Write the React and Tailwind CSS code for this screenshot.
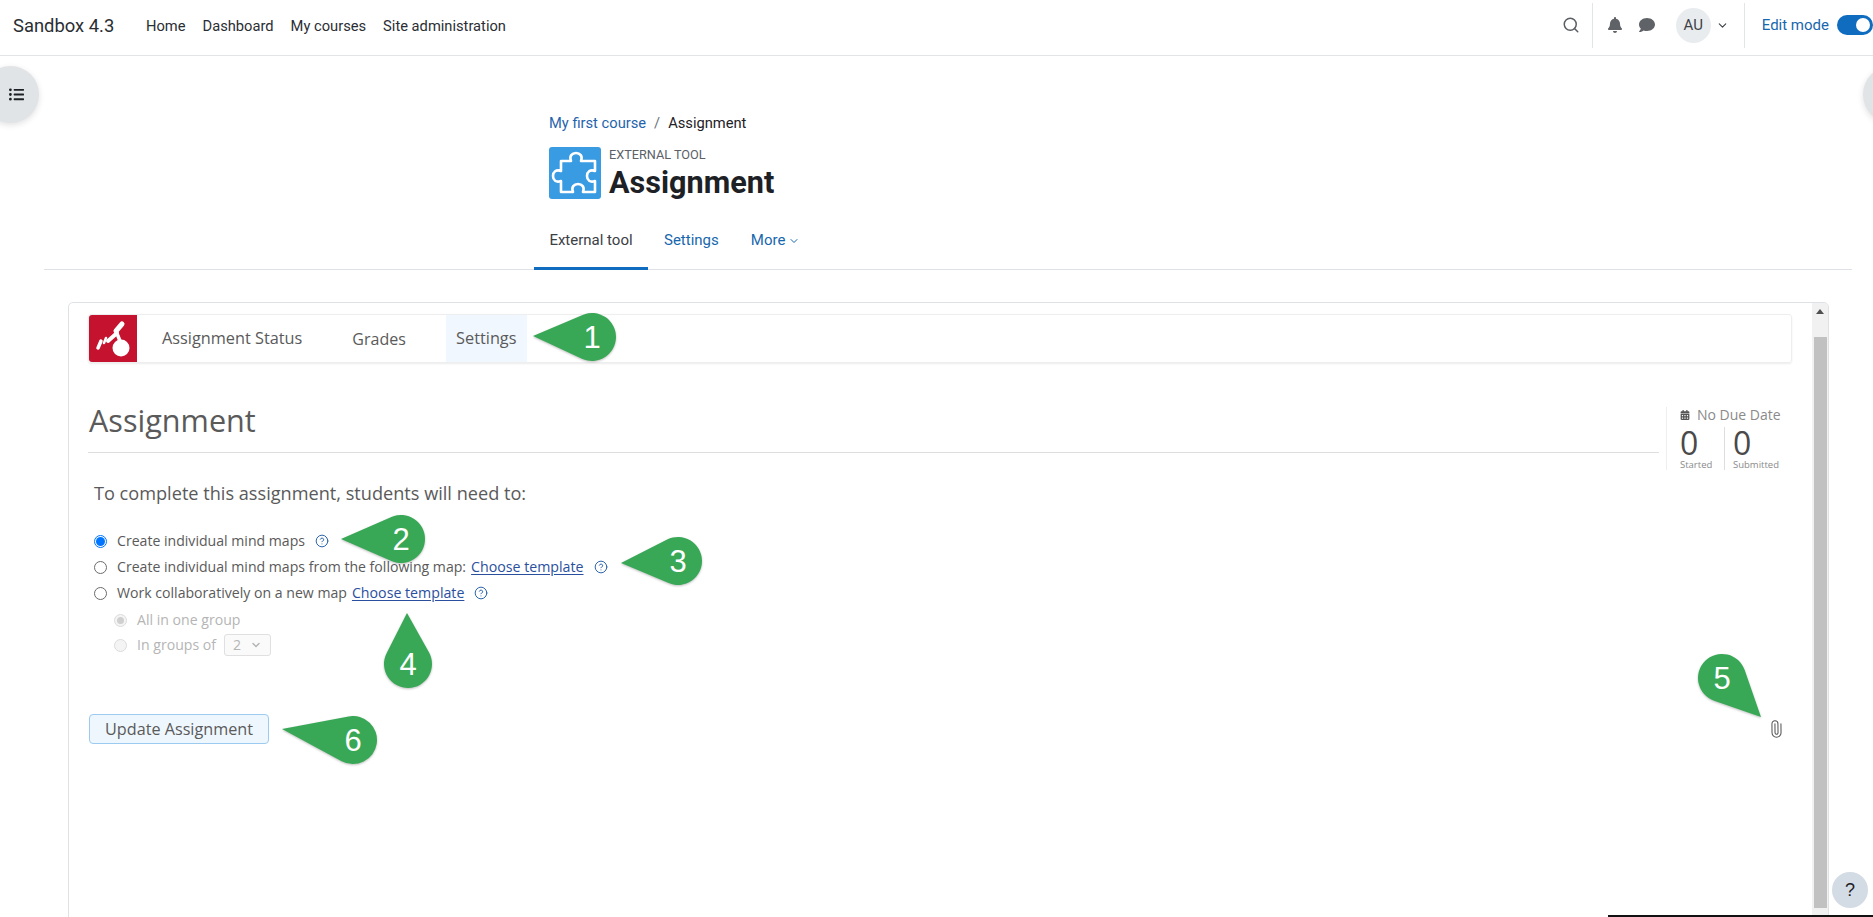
import React from "react";
import { Search, ChevronDown, CircleHelp, Paperclip } from "lucide-react";
import { FaBell, FaComment, FaListUl, FaCalendarAlt } from "react-icons/fa";

function Callout({ n, pos, tip }) {
  const r = 24;
  const d = Math.hypot(tip[0], tip[1]);
  const base = Math.atan2(tip[1], tip[0]);
  const off = Math.acos(r / d);
  const a = [r * Math.cos(base + off), r * Math.sin(base + off)];
  const b = [r * Math.cos(base - off), r * Math.sin(base - off)];
  const path = `M${tip[0]} ${tip[1]} L${a[0]} ${a[1]} A${r} ${r} 0 1 1 ${b[0]} ${b[1]} Z`;
  return (
    <div className={`absolute w-12 h-12 flex items-center justify-center ${pos}`}>
      <svg viewBox="0 0 48 48" className="absolute inset-0 w-12 h-12 overflow-visible drop-shadow-[0_1px_1px_rgba(0,0,0,0.25)]">
        <g transform="translate(24 24)">
          <path d={path} fill="#38a856" />
        </g>
      </svg>
      <span className="relative font-['Liberation_Sans',sans-serif] text-[31px] leading-none text-white">{n}</span>
    </div>
  );
}

function RadioDot({ checked, disabled }) {
  if (disabled) {
    return (
      <span className="w-[13px] h-[13px] rounded-full border border-[#dcdcdc] bg-[#f4f4f4] flex items-center justify-center shrink-0">
        {checked && <span className="w-[7px] h-[7px] rounded-full bg-[#cfcfcf]" />}
      </span>
    );
  }
  return checked ? (
    <span className="w-[13px] h-[13px] rounded-full border border-[#0075ff] bg-white flex items-center justify-center shrink-0">
      <span className="w-[9px] h-[9px] rounded-full bg-[#0075ff]" />
    </span>
  ) : (
    <span className="w-[13px] h-[13px] rounded-full border border-[#6b6b6b] bg-white shrink-0" />
  );
}

function Help() {
  return <CircleHelp size={14} strokeWidth={1.7} className="text-[#2a63a8] shrink-0" />;
}

function Tpl() {
  return <a className="text-[#2a4f9e] underline text-[14.2px] underline-offset-2">Choose template</a>;
}

export default function App() {
  return (
    <div className="relative h-[917px] overflow-hidden bg-white font-['Roboto',sans-serif] text-[#1d2125]">
      {/* top nav */}
      <header className="h-[56px] border-b border-[#e3e4e5] pb-[5px] flex items-center text-[14.7px] text-[#2a2e33]">
        <span className="ml-[13px] pt-[1px] text-[18.4px] w-[133px]">Sandbox 4.3</span>
        <nav className="flex gap-[17px] pt-[2px]">
          <a>Home</a>
          <a>Dashboard</a>
          <a>My courses</a>
          <a>Site administration</a>
        </nav>
        <div className="ml-auto flex items-center h-[45px]">
          <Search size={18} strokeWidth={2} className="text-[#5a5f64] mr-[12px]" />
          <span className="w-px h-[45px] bg-[#e3e4e5]" />
          <FaBell size={16} className="text-[#5f6368] ml-[14px]" />
          <FaComment size={16} className="text-[#5f6368] ml-[16px]" />
          <span className="ml-[21px] w-[35px] h-[35px] rounded-full bg-[#e9ecef] flex items-center justify-center text-[#3c4146] text-[15px]">AU</span>
          <ChevronDown size={13} strokeWidth={2} className="ml-[5px] text-[#3c4146]" />
          <span className="ml-[15px] w-px h-[45px] bg-[#e3e4e5]" />
          <span className="ml-[17px] text-[#1667ae] text-[15px]">Edit mode</span>
          <span className="ml-[8px] w-[36px] h-[20px] rounded-full bg-[#0f6cbf] flex items-center justify-end pr-[3px]">
            <span className="w-[14px] h-[14px] rounded-full bg-white" />
          </span>
        </div>
      </header>

      {/* page header */}
      <div className="pl-[549px] pt-[57px]">
        <div className="flex items-center gap-[8px] text-[14.7px] leading-[20px]">
          <a className="text-[#1f64ad]">My first course</a>
          <span className="text-[#6a737b]">/</span>
          <span>Assignment</span>
        </div>
        <div className="mt-[14px] flex items-start gap-[8px]">
          <div className="w-[52px] h-[52px] rounded-[3px] bg-[#399be2] flex items-center justify-center">
            <svg viewBox="0 0 52 52" className="w-[52px] h-[52px]" fill="none" stroke="#fff" strokeWidth="2.6" strokeLinejoin="round">
              <path d="M12 14H22C20 9 23 6 27 6C31 6 34 9 32 14H46V24C41 22 38 25 38 29C38 33 41 36 46 34V45H34C36 40 33 37 29 37C25 37 22 40 24 45H12V34C7 36 4 33 4 29C4 25 7 22 12 24Z" />
            </svg>
          </div>
          <div className="flex flex-col pt-[1px]">
            <span className="text-[12.7px] leading-[14px] text-[#5b6167] uppercase">External tool</span>
            <h1 className="mt-[3px] text-[30.6px] leading-[36px] font-bold text-[#1d2125]">Assignment</h1>
          </div>
        </div>
      </div>

      {/* tabs */}
      <div className="mt-[18px] ml-[44px] w-[1808px] border-b border-[#dee2e6] h-[51px] pl-[490px] flex text-[15px]">
        <a className="w-[114px] h-[51px] border-b-[3px] border-[#0f6cbf] pb-[5px] flex items-center justify-center text-[#3b4046]">External tool</a>
        <a className="ml-[16px] h-[51px] pb-[8px] flex items-center text-[#1667ae]">Settings</a>
        <a className="ml-[32px] h-[51px] pb-[8px] flex items-center gap-[3px] text-[#1667ae]">More <ChevronDown size={12} strokeWidth={2} /></a>
      </div>

      {/* iframe box */}
      <div className="absolute left-[68px] top-[302px] w-[1761px] h-[640px] border border-[#dee2e6] rounded-[5px] flex font-['Open_Sans',sans-serif] text-[#5a5a5a] overflow-hidden">
        <div className="flex-1 min-w-0 flex flex-col pl-[19px] pt-[11px]">
          <div className="w-[1704px] h-[49px] border border-[#eeeeee] rounded-[3px] shadow-[0_1px_2px_rgba(0,0,0,0.08)] flex items-stretch text-[16.3px]">
            <div className="w-[48px] bg-[#c5122f] rounded-l-[3px] flex items-center justify-center shrink-0">
              <svg viewBox="0 0 48 48" className="w-[48px] h-[48px]" fill="none" stroke="#fff" strokeLinecap="round">
                <circle cx="32" cy="33" r="8.5" fill="#fff" stroke="none" />
                <path d="M33 9L27 16" strokeWidth="5" />
                <path d="M27 16L31 26" strokeWidth="3.5" />
                <path d="M28 18L19 26" strokeWidth="4" />
                <path d="M17 23L15 28" strokeWidth="2.5" />
                <path d="M12 26L9 33" strokeWidth="3.5" />
              </svg>
            </div>
            <span className="ml-[25px] flex items-center">Assignment Status</span>
            <span className="ml-[50px] flex items-center text-[16px]">Grades</span>
            <span className="ml-[40px] w-[81px] bg-[#f0f7fe] flex items-center justify-center">Settings</span>
          </div>

          <div className="mt-[27px] flex">
            <div className="w-[1571px]">
              <h2 className="pl-[1px] text-[30.6px] leading-[60px] h-[63px] border-b border-[#dedede] font-normal">Assignment</h2>
              <p className="mt-[28px] ml-[6px] text-[18.15px] leading-[24px]">To complete this assignment, students will need to:</p>
            </div>
            <div className="ml-[7px] w-[130px] h-[63px] border-l border-[#eeeeee] pl-[13px] mt-[17px]">
              <div className="flex items-center gap-[7px] text-[14px] leading-[18px] text-[#8a8a8a] mt-[-1px]">
                <FaCalendarAlt size={10} className="text-[#555]" />
                <span>No Due Date</span>
              </div>
              <div className="flex mt-[3px]">
                <div className="w-[44px] flex flex-col">
                  <span className="text-[32px] leading-[32px] text-[#4a4a4a]">0</span>
                  <span className="text-[9.5px] leading-[11px] text-[#8a8a8a]">Started</span>
                </div>
                <div className="border-l border-[#dedede] pl-[8px] flex flex-col">
                  <span className="text-[32px] leading-[32px] text-[#4a4a4a]">0</span>
                  <span className="text-[9.5px] leading-[11px] text-[#8a8a8a]">Submitted</span>
                </div>
              </div>
            </div>
          </div>

          <div className="mt-[23px] ml-[6px] flex flex-col text-[14.1px]">
            <div className="h-[26px] flex items-center gap-[10px]">
              <RadioDot checked />
              <span>Create individual mind maps</span>
              <Help />
            </div>
            <div className="h-[26px] flex items-center gap-[10px]">
              <RadioDot />
              <span className="flex items-center gap-[5px]">Create individual mind maps from the following map: <Tpl /></span>
              <Help />
            </div>
            <div className="h-[26px] flex items-center gap-[10px]">
              <RadioDot />
              <span className="flex items-center gap-[5px]">Work collaboratively on a new map <Tpl /></span>
              <Help />
            </div>
            <div className="h-[26px] mt-[1px] ml-[20px] flex items-center gap-[10px] text-[#b5b5b5]">
              <RadioDot checked disabled />
              <span>All in one group</span>
            </div>
            <div className="h-[24px] ml-[20px] flex items-center gap-[10px] text-[#b5b5b5]">
              <RadioDot disabled />
              <span>In groups of</span>
              <span className="ml-[-2px] w-[47px] h-[22px] border border-[#e0e0e0] rounded-[3px] bg-[#fafafa] flex items-center justify-between px-[8px]">
                2 <ChevronDown size={12} strokeWidth={3} />
              </span>
            </div>
          </div>

          <div className="mt-[57px] flex items-center w-[1697px] justify-between">
            <button className="ml-[1px] w-[180px] h-[30px] border border-[#9ccbef] rounded-[4px] bg-[#eff7fe] text-[16.2px] leading-none text-[#5a5a5a]">Update Assignment</button>
            <Paperclip size={18} strokeWidth={1.4} className="text-[#555] -rotate-45" />
          </div>
        </div>

        {/* scrollbar */}
        <div className="w-[16px] shrink-0 bg-[#f1f1f1] flex flex-col items-center">
          <span className="mt-[6px] w-0 h-0 border-x-[4px] border-x-transparent border-b-[5px] border-b-[#505050]" />
          <span className="mt-[23px] w-[13px] h-[571px] bg-[#c1c1c1]" />
        </div>
      </div>

      {/* floating drawer toggles */}
      <div className="absolute left-[-18px] top-[66px] w-[57px] h-[57px] rounded-full bg-[#e1e4e7] shadow-[0_2px_6px_rgba(0,0,0,0.12)] flex items-center justify-end pr-[15px]">
        <FaListUl size={15} className="text-[#1d2125]" />
      </div>
      <div className="absolute left-[1863px] top-[66px] w-[57px] h-[57px] rounded-full bg-[#e1e4e7] shadow-[0_2px_6px_rgba(0,0,0,0.12)]" />

      {/* help button */}
      <div className="absolute left-[1832px] top-[872px] w-[36px] h-[36px] rounded-full bg-[#d3dbe4] flex items-center justify-center text-[18px] text-[#1d2125] font-['Liberation_Sans',sans-serif]">?</div>

      {/* bottom edge */}
      <div className="absolute left-[1608px] top-[915px] w-[265px] h-[2px] bg-[#111]" />

      {/* annotations */}
      <Callout n="1" pos="left-[568px] top-[313px]" tip={[-59, -1]} />
      <Callout n="2" pos="left-[377px] top-[515px]" tip={[-60, 0]} />
      <Callout n="3" pos="left-[654px] top-[537px]" tip={[-57, 2]} />
      <Callout n="4" pos="left-[384px] top-[640px]" tip={[-1, -51]} />
      <Callout n="5" pos="left-[1698px] top-[654px]" tip={[39, 39]} />
      <Callout n="6" pos="left-[329px] top-[716px]" tip={[-71, -11]} />
    </div>
  );
}
